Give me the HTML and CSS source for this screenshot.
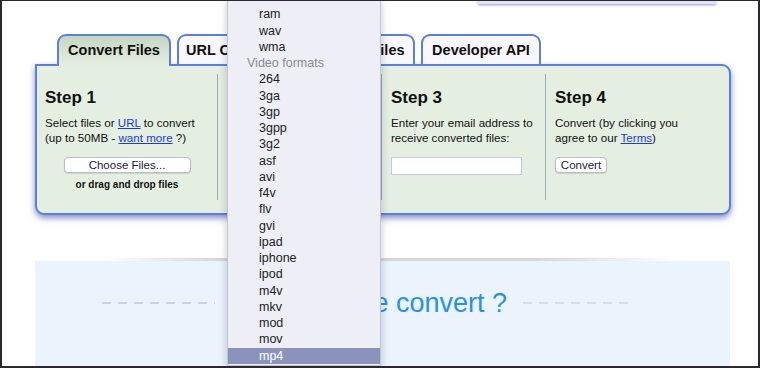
FILE: index.html
```html
<!DOCTYPE html>
<html lang="en">
  <head>
    <meta charset="UTF-8">
    <title>Convert Files</title>
    <link rel="stylesheet" href="styles.css">
  </head>
  <body>
    <div class="frame">
      <div class="topbar"></div>

      <div class="converter">
        <ul class="tabs">
          <li class="tab tab-convert active">Convert Files</li>
          <li class="tab tab-url">URL Converter</li>
          <li class="tab tab-manage">Manage Files</li>
          <li class="tab tab-api">Developer API</li>
        </ul>

        <div class="panel">
          <div class="step">
            <h2>Step 1</h2>
            <p>Select files or <a href="#">URL</a> to convert<br>(up to 50MB - <a href="#">want more</a> ?)</p>
            <div class="center">
              <button class="btn btn-files">Choose Files...</button>
              <div class="drop">or drag and drop files</div>
            </div>
          </div>
          <div class="step">
            <h2>Step 2</h2>
            <p>Convert files to:</p>
          </div>
          <div class="step">
            <h2>Step 3</h2>
            <p>Enter your email address to<br>receive converted files:</p>
            <input class="email" type="text">
          </div>
          <div class="step">
            <h2>Step 4</h2>
            <p>Convert (by clicking you<br>agree to our <a href="#">Terms</a>)</p>
            <button class="btn btn-convert">Convert</button>
          </div>
        </div>
      </div>

      <div class="rule"></div>
      <div class="lower">
        <div class="lower-title">
          <span class="dash dash-left"></span>
          <h3>What can we convert ?</h3>
          <span class="dash dash-right"></span>
        </div>
      </div>

      <!-- open select list, drawn over the page -->
      <ul class="options">
        <li>ram</li>
        <li>wav</li>
        <li>wma</li>
        <li class="group">Video formats</li>
        <li>264</li>
        <li>3ga</li>
        <li>3gp</li>
        <li>3gpp</li>
        <li>3g2</li>
        <li>asf</li>
        <li>avi</li>
        <li>f4v</li>
        <li>flv</li>
        <li>gvi</li>
        <li>ipad</li>
        <li>iphone</li>
        <li>ipod</li>
        <li>m4v</li>
        <li>mkv</li>
        <li>mod</li>
        <li>mov</li>
        <li class="selected">mp4</li>
      </ul>
    </div>
  </body>
</html>
```

FILE: styles.css
```css
* {
  margin: 0;
  padding: 0;
  box-sizing: border-box;
}

body {
  background: #fff;
  font-family: "Liberation Sans", Arial, sans-serif;
  color: #111;
}

.frame {
  position: relative;
  width: 760px;
  height: 368px;
  overflow: hidden;
  border: 2px solid #2a2a2e;
  border-top-width: 1px;
  background: #fff;
}

.topbar {
  margin-left: 476px;
  width: 238px;
  height: 3px;
  background: #e2e3ee;
  box-shadow: 0 1px 3px rgba(90, 110, 215, 0.75);
}

.converter {
  margin: 30px 0 0 33px;
  width: 696px;
}

/* tabs */
.tabs {
  list-style: none;
  display: flex;
  align-items: flex-end;
  gap: 6px;
  padding-left: 22px;
}

.tab {
  height: 30px;
  line-height: 28px;
  border: 2px solid #5a80da;
  border-bottom: 0;
  border-radius: 9px 9px 0 0;
  background: #f7f7fd;
  font-size: 14.5px;
  font-weight: bold;
  text-align: center;
  white-space: nowrap;
  overflow: hidden;
}

.tab.active {
  position: relative;
  z-index: 1;
  height: 32px;
  margin-bottom: -2px;
  background: linear-gradient(#c6d6c0, #dce8d8 70%, #e4efe2);
}

.tab-convert { width: 114px; }
.tab-url { width: 120px; }
.tab-manage { width: 112px; }
.tab-api { width: 120px; }

/* panel */
.panel {
  display: grid;
  grid-template-columns: 180px 164px 164px 1fr;
  padding: 8px 0 13px;
  background: #e4efe2;
  border: 2px solid #5a80da;
  border-radius: 0 9px 9px 9px;
  box-shadow: 0 3px 6px rgba(70, 80, 175, 0.65);
}

.step {
  height: 126px;
  padding: 14px 8px 0;
}

.step + .step {
  border-left: 1px solid #98a6c2;
  padding-left: 9px;
}

.step h2 {
  font-size: 17px;
  line-height: 20px;
  margin-bottom: 7px;
}

.step p {
  font-size: 11.6px;
  line-height: 15px;
  margin-bottom: 12px;
}

.step a {
  color: #1d3bd4;
}

.center {
  display: flex;
  flex-direction: column;
  align-items: center;
}

.btn {
  display: block;
  height: 16px;
  background: #fff;
  border: 1px solid #bcbcc6;
  border-radius: 4px;
  box-shadow: 0 1px 1px rgba(0, 0, 0, 0.12);
  font-family: "Liberation Sans", Arial, sans-serif;
  font-size: 11.5px;
  line-height: 14px;
  color: #22223a;
}

.btn-files {
  width: 127px;
}

.btn-convert {
  width: 52px;
}

.drop {
  margin-top: 6px;
  font-size: 10px;
  font-weight: bold;
  line-height: 12px;
}

.email {
  display: block;
  width: 131px;
  height: 18px;
  border: 1px solid #c6cad8;
  background: #fff;
}

/* lower block */
.rule {
  height: 3px;
  margin: 43px 80px 0 103px;
  background: linear-gradient(to right, rgba(200, 195, 190, 0), rgba(190, 180, 170, 0.55) 20%, rgba(190, 180, 170, 0.55) 75%, rgba(200, 195, 190, 0));
}

.lower {
  margin-left: 33px;
  width: 695px;
  height: 120px;
  background: #ebf3fd;
  padding: 26px 100px 0 67px;
}

.lower-title {
  display: flex;
  align-items: center;
}

.lower-title h3 {
  width: 308px;
  padding-right: 16px;
  text-align: right;
  font-size: 27px;
  line-height: 32px;
  font-weight: normal;
  color: #2a8fe6;
  white-space: nowrap;
  overflow: hidden;
}

.dash {
  height: 2px;
  background: repeating-linear-gradient(to right, #ccd2f2 0 9px, transparent 9px 16px);
}

.dash-left {
  width: 113px;
}

.dash-right {
  width: 107px;
  background: repeating-linear-gradient(to right, #d6dcea 0 9px, transparent 9px 16px);
}

/* open select */
.options {
  position: absolute;
  left: 225px;
  top: -1px;
  bottom: 0;
  width: 154px;
  list-style: none;
  padding-top: 6.4px;
  background: #eeeef6;
  border: 1px solid #c2c5d8;
  border-top: 0;
  box-shadow: 0 2px 8px rgba(40, 40, 80, 0.25);
  font-size: 12.5px;
  color: #222;
}

.options li {
  height: 16.25px;
  line-height: 16.25px;
  padding-left: 31px;
}

.options .group {
  padding-left: 19px;
  color: #8a8a90;
}

.options .selected {
  background: #8b93bb;
  color: #fff;
}
```
